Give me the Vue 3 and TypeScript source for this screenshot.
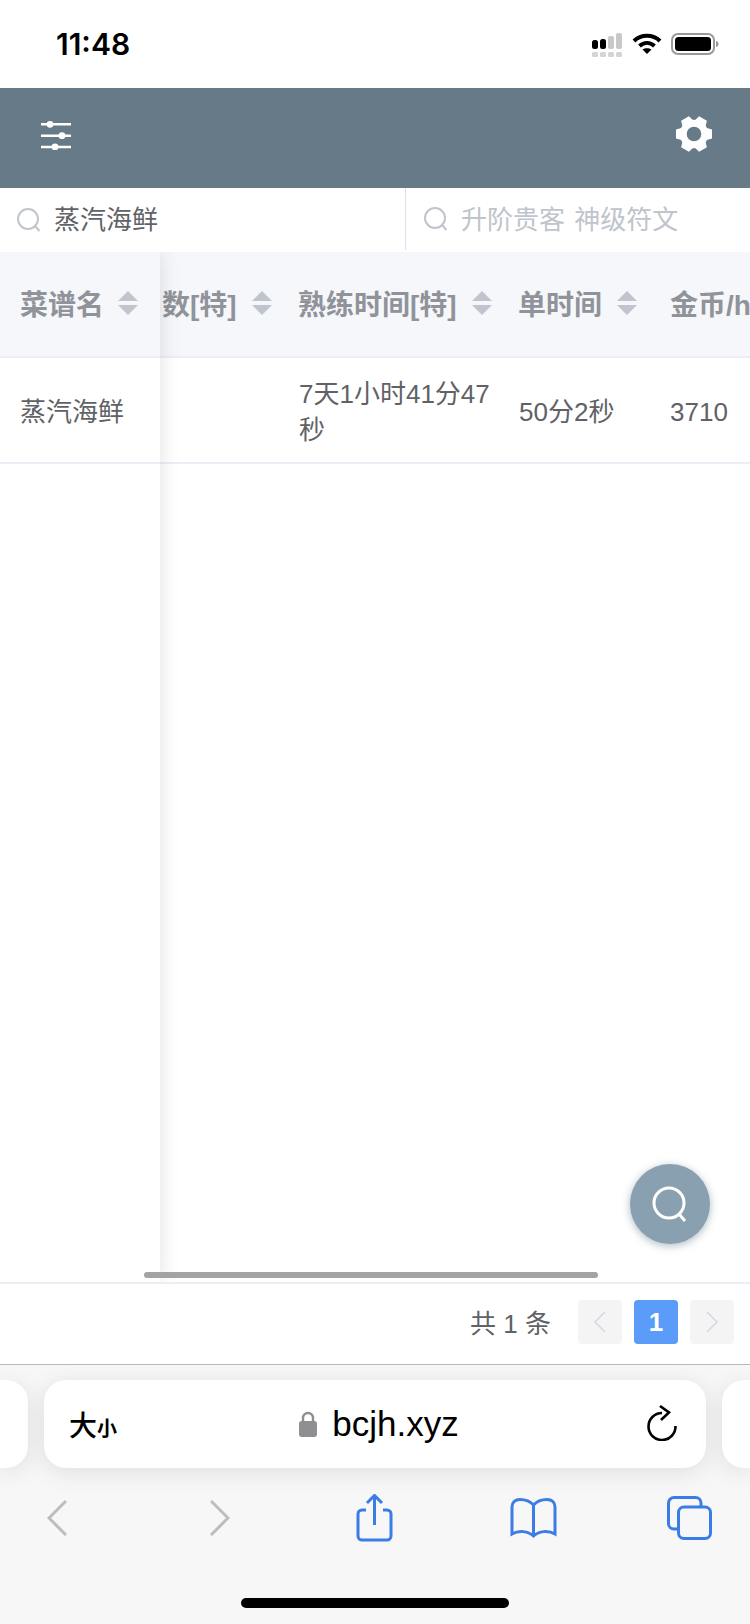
<template>
  <div class="page">
    <div class="status">
      <span class="status__time">11:48</span>
      <div class="status__icons">
        <svg width="32" height="26" viewBox="0 0 32 26">
          <rect x="1" y="9" width="6" height="9" rx="2.5" fill="#000" />
          <rect x="9" y="8" width="6" height="10" rx="2.5" fill="#000" />
          <rect x="17" y="5" width="6" height="13" rx="2" fill="#c8c8c8" />
          <rect x="25" y="2" width="6" height="16" rx="2" fill="#c8c8c8" />
          <rect x="1" y="21" width="6" height="5" rx="1.5" fill="#d4d4d4" />
          <rect x="9" y="21" width="6" height="5" rx="1.5" fill="#d4d4d4" />
          <rect x="17" y="21" width="6" height="5" rx="1.5" fill="#d4d4d4" />
          <rect x="25" y="21" width="6" height="5" rx="1.5" fill="#d4d4d4" />
        </svg>
        <svg width="30" height="22" viewBox="0 0 30 22" fill="none" stroke="#000" stroke-width="4">
          <path d="M2 8 C9 1 21 1 28 8" />
          <path d="M7.5 13 C12 9 18 9 22.5 13" />
          <path d="M15 21 L10.5 16.6 C13 14.8 17 14.8 19.5 16.6 Z" fill="#000" stroke="none" />
        </svg>
        <svg width="48" height="22" viewBox="0 0 48 22">
          <rect x="1" y="1" width="42" height="20" rx="6" fill="none" stroke="#9a9a9a" stroke-width="2" />
          <rect x="4" y="4" width="36" height="14" rx="3.5" fill="#000" />
          <path d="M45 8 C47 8.5 47.5 9.5 47.5 11 C47.5 12.5 47 13.5 45 14 Z" fill="#9a9a9a" />
        </svg>
      </div>
    </div>

    <header class="topbar">
      <svg class="topbar__sliders" width="34" height="30" viewBox="0 0 34 30" stroke="#fff" fill="#fff">
        <path d="M2 4.3 H32 M2 15.7 H32 M2 27 H32" stroke-width="2.5" />
        <circle cx="11" cy="4.3" r="3.4" stroke="none" />
        <circle cx="23" cy="15.7" r="3.4" stroke="none" />
        <circle cx="16" cy="27" r="3.4" stroke="none" />
      </svg>
      <svg class="topbar__gear" width="36" height="36" viewBox="-18 -18 36 36" fill="#fff">
        <circle r="10.8" fill="none" stroke="#fff" stroke-width="7" />
        <polygon
          v-for="angle in gearTeeth"
          :key="angle"
          points="11,-6.5 18,-4.5 18,4.5 11,6.5"
          :transform="`rotate(${angle})`"
        />
      </svg>
    </header>

    <div class="search">
      <div class="search__field">
        <svg class="search__icon" width="24" height="24" viewBox="0 0 24 24" fill="none" stroke="#c0c4cc" stroke-width="2">
          <circle cx="11" cy="11" r="10" />
          <path d="M18 18 L22.500 23" />
        </svg>
        <span class="search__value">蒸汽海鲜</span>
      </div>
      <div class="search__field search__field--second">
        <svg class="search__icon" width="24" height="24" viewBox="0 0 24 24" fill="none" stroke="#c0c4cc" stroke-width="2">
          <circle cx="11" cy="11" r="10" />
          <path d="M18 18 L22.500 23" />
        </svg>
        <span class="search__hint">升阶贵客 神级符文</span>
      </div>
    </div>

    <div class="table">
      <div class="table__fixed">
        <div class="head-cell">
          <span>菜谱名</span>
          <i class="caret"></i>
        </div>
        <div class="body-cell body-cell--name">蒸汽海鲜</div>
      </div>
      <div class="table__scroll">
        <div class="table__row">
          <div v-for="col in columns" :key="col.title" class="head-cell" :class="col.cls">
            <span>{{ col.title }}</span>
            <i v-if="col.sort" class="caret"></i>
          </div>
        </div>
        <div class="table__row">
          <div v-for="col in columns" :key="col.title" class="body-cell" :class="col.cls">{{ col.value }}</div>
        </div>
      </div>
      <div class="table__bar"></div>
    </div>

    <div class="pager">
      <span class="pager__total">共 1 条</span>
      <button class="pager__btn">
        <svg width="14" height="24" viewBox="0 0 14 24" fill="none" stroke="#d5d8de" stroke-width="1.500">
          <path d="M12 2 L2 12 L12 22" />
        </svg>
      </button>
      <button class="pager__btn pager__btn--on">1</button>
      <button class="pager__btn">
        <svg width="14" height="24" viewBox="0 0 14 24" fill="none" stroke="#d5d8de" stroke-width="1.500">
          <path d="M2 2 L12 12 L2 22" />
        </svg>
      </button>
    </div>

    <div class="chrome">
      <div class="chrome__tabs">
        <div class="pill pill--left"></div>
        <div class="pill pill--main">
          <span class="pill__size">大<small>小</small></span>
          <span class="pill__url">
            <svg width="18" height="26" viewBox="0 0 18 26">
              <path d="M4 11 V7 A5 5 0 0 1 14 7 V11" fill="none" stroke="#8e8e93" stroke-width="2.400" />
              <rect x="0" y="10" width="18" height="16" rx="3" fill="#8e8e93" />
            </svg>
            bcjh.xyz
          </span>
          <svg class="pill__reload" width="30" height="36" viewBox="0 0 30 36" fill="none" stroke="#000" stroke-width="2.600">
            <path d="M15 8 A13.500 13.500 0 1 0 28.500 21" />
            <path d="M13 1 L22 7.500 L14 15" />
          </svg>
        </div>
        <div class="pill pill--right"></div>
      </div>
      <div class="chrome__tools">
        <svg class="tool tool--back" width="20" height="36" viewBox="0 0 20 36" fill="none" stroke="#bdbdbd" stroke-width="3">
          <path d="M19 1 L2 18 L19 35" />
        </svg>
        <svg class="tool tool--forward" width="20" height="36" viewBox="0 0 20 36" fill="none" stroke="#bdbdbd" stroke-width="3">
          <path d="M1 1 L18 18 L1 35" />
        </svg>
        <svg class="tool tool--share" width="37" height="48" viewBox="0 0 37 48" fill="none" stroke="#3b7de4" stroke-width="3">
          <path d="M10 16 H6 A4 4 0 0 0 2 20 V42 A4 4 0 0 0 6 46 H31 A4 4 0 0 0 35 42 V20 A4 4 0 0 0 31 16 H27" />
          <path d="M18.500 31 V2 M11 9 L18.500 1.500 L26 9" />
        </svg>
        <svg class="tool tool--book" width="47" height="40" viewBox="0 0 47 40" fill="none" stroke="#3b7de4" stroke-width="3">
          <path d="M23.500 7 C20 3 14 1.500 10 1.500 C5 1.500 2 4.500 2 9 V36 C9 32 18 33 23.500 38 C29 33 38 32 45 36 V9 C45 4.500 42 1.500 37 1.500 C33 1.500 27 3 23.500 7 Z M23.500 7 V38" />
        </svg>
        <svg class="tool tool--tabs" width="45" height="44" viewBox="0 0 45 44" fill="none" stroke="#3b7de4" stroke-width="3">
          <path d="M11 33 H7 A5.500 5.500 0 0 1 1.500 27.500 V7 A5.500 5.500 0 0 1 7 1.500 H28.500 A5.500 5.500 0 0 1 34 7 V11" />
          <rect x="11.500" y="11" width="32" height="31.500" rx="5.500" />
        </svg>
      </div>
      <div class="chrome__home"></div>
    </div>

    <button class="fab">
      <svg width="36" height="36" viewBox="0 0 36 36" fill="none" stroke="#fff" stroke-width="3">
        <circle cx="17" cy="17" r="15" />
        <path d="M27 28 L33 35" />
      </svg>
    </button>
  </div>
</template>

<script setup lang="ts">
interface Column {
  title: string
  value: string
  cls: string
  sort: boolean
}

const gearTeeth: number[] = [0, 60, 120, 180, 240, 300]

const columns: Column[] = [
  { title: '数[特]', value: '', cls: 'col-count', sort: true },
  { title: '熟练时间[特]', value: '7天1小时41分47秒', cls: 'col-skill', sort: true },
  { title: '单时间', value: '50分2秒', cls: 'col-single', sort: true },
  { title: '金币/h', value: '3710', cls: 'col-gold', sort: false },
]
</script>

<style>
html,
body {
  margin: 0;
  background: #fff;
}
</style>

<style scoped>
.page {
  position: relative;
  display: flex;
  flex-direction: column;
  width: 750px;
  height: 1624px;
  overflow: hidden;
  background: #fff;
  font-family: "Liberation Sans", "Noto Sans CJK SC", sans-serif;
}
.status {
  display: flex;
  flex: 0 0 88px;
  align-items: center;
  justify-content: space-between;
  padding: 0 31px 0 56px;
  box-sizing: border-box;
}
.status__time {
  font-family: Inter, sans-serif;
  font-size: 30px;
  font-weight: 600;
  color: #000;
}
.status__icons {
  display: flex;
  align-items: center;
  column-gap: 9px;
}
.topbar {
  display: flex;
  flex: 0 0 100px;
  align-items: center;
  justify-content: space-between;
  padding: 0 38px 0 39px;
  box-sizing: border-box;
  background: #667a87;
}
.topbar__sliders {
  margin-bottom: 7px;
}
.topbar__gear {
  margin-bottom: 8px;
}
.search {
  display: flex;
  flex: 0 0 64px;
}
.search__field {
  display: flex;
  flex: 0 0 405px;
  align-items: center;
  box-sizing: border-box;
  padding-left: 17px;
  column-gap: 14px;
  font-size: 26px;
}
.search__field--second {
  flex: 1 1 auto;
  padding-left: 18px;
  column-gap: 13px;
  border-left: 1px solid #dcdfe6;
  margin-bottom: 2px;
}
.search__value {
  margin-bottom: 6px;
  margin-left: -1px;
  color: #606266;
}
.search__hint {
  margin-bottom: 3px;
  color: #c0c4cc;
  word-spacing: 2px;
}
.table {
  position: relative;
  display: flex;
  flex: 1 1 auto;
  min-height: 0;
}
.table__fixed {
  position: relative;
  z-index: 1;
  flex: 0 0 160px;
  background: #fff;
  box-shadow: 0 0 20px rgba(0, 0, 0, 0.12);
  clip-path: inset(0 -30px 0 0);
}
.table__scroll {
  flex: 1 1 auto;
  min-width: 0;
  overflow: hidden;
}
.table__row {
  display: grid;
  grid-template-columns: 119px 220px 151px 100px;
  background: #fff;
}
.head-cell {
  display: flex;
  align-items: center;
  box-sizing: border-box;
  height: 106px;
  padding: 0 0 3px 20px;
  column-gap: 14px;
  border-bottom: 2px solid #ebeef5;
  background: #f5f7fa;
  color: #909399;
  font-size: 28px;
  font-weight: 700;
  white-space: nowrap;
}
.body-cell {
  display: flex;
  align-items: center;
  box-sizing: border-box;
  height: 106px;
  padding: 4px 8px 0 20px;
  border-bottom: 2px solid #ebeef5;
  color: #606266;
  font-size: 26px;
  line-height: 36px;
}
.body-cell--name {
  white-space: nowrap;
}
.head-cell.col-count {
  padding-left: 2px;
  column-gap: 15px;
}
.head-cell.col-skill {
  padding-left: 19px;
  column-gap: 15px;
}
.head-cell.col-single {
  padding-left: 19px;
  column-gap: 15px;
}
.head-cell.col-gold {
  overflow: hidden;
}
.caret {
  position: relative;
  display: block;
  flex: none;
  width: 20px;
  height: 24px;
}
.caret::before,
.caret::after {
  content: "";
  position: absolute;
  left: 0;
  border-left: 10px solid transparent;
  border-right: 10px solid transparent;
}
.caret::before {
  top: 0;
  border-bottom: 10px solid #c0c4cc;
}
.caret::after {
  bottom: 0;
  border-top: 10px solid #c0c4cc;
}
.table__bar {
  position: absolute;
  z-index: 2;
  left: 144px;
  bottom: 4px;
  width: 454px;
  height: 6px;
  border-radius: 3px;
  background: #a3a3a3;
}
.pager {
  display: flex;
  flex: 0 0 82px;
  align-items: flex-start;
  justify-content: flex-end;
  box-sizing: border-box;
  padding: 16px 16px 0 0;
  border-top: 2px solid #ebeef5;
  column-gap: 12px;
}
.pager__total {
  margin-right: 15px;
  color: #606266;
  font-size: 26px;
  line-height: 48px;
}
.pager__btn {
  display: flex;
  align-items: center;
  justify-content: center;
  width: 44px;
  height: 44px;
  padding: 0;
  border: 0;
  border-radius: 4px;
  background: #f4f4f5;
  font-family: inherit;
  font-size: 26px;
  font-weight: 700;
}
.pager__btn--on {
  background: #5a9cf8;
  color: #fff;
}
.chrome {
  display: flex;
  flex: 0 0 260px;
  flex-direction: column;
  box-sizing: border-box;
  border-top: 1px solid #b8b8b8;
  background: #f7f7f8;
}
.chrome__tabs {
  display: flex;
  column-gap: 16px;
  padding-top: 15px;
}
.pill {
  height: 88px;
  background: #fff;
  box-shadow: 0 4px 24px rgba(0, 0, 0, 0.1);
}
.pill--left {
  flex: 0 0 28px;
  border-radius: 0 22px 22px 0;
}
.pill--main {
  display: flex;
  flex: 0 0 662px;
  align-items: center;
  justify-content: space-between;
  box-sizing: border-box;
  padding: 0 29px 0 25px;
  border-radius: 22px;
}
.pill--right {
  flex: 1 1 auto;
  border-radius: 22px 0 0 22px;
}
.pill__size {
  color: #000;
  font-size: 28px;
  font-weight: 500;
}
.pill__size small {
  font-size: 20px;
  font-weight: 700;
}
.pill__url {
  display: flex;
  align-items: center;
  column-gap: 15px;
  margin-left: -6px;
  color: #000;
  font-size: 35px;
}
.pill__reload {
  margin-top: -2px;
}
.chrome__tools {
  display: flex;
  align-items: center;
  height: 50px;
  margin-top: 25px;
  padding-left: 47px;
}
.tool--forward {
  margin-left: 143px;
}
.tool--share {
  margin-left: 126px;
}
.tool--book {
  margin-left: 117px;
}
.tool--tabs {
  margin-left: 110px;
}
.chrome__home {
  width: 268px;
  height: 10px;
  margin: 55px auto 0;
  border-radius: 5px;
  background: #000;
}
.fab {
  position: absolute;
  left: 630px;
  top: 1164px;
  display: flex;
  align-items: center;
  justify-content: center;
  width: 80px;
  height: 80px;
  padding: 0;
  border: 0;
  border-radius: 50%;
  background: #88a0b0;
  box-shadow: 0 2px 8px rgba(80, 105, 125, 0.45);
}
</style>
